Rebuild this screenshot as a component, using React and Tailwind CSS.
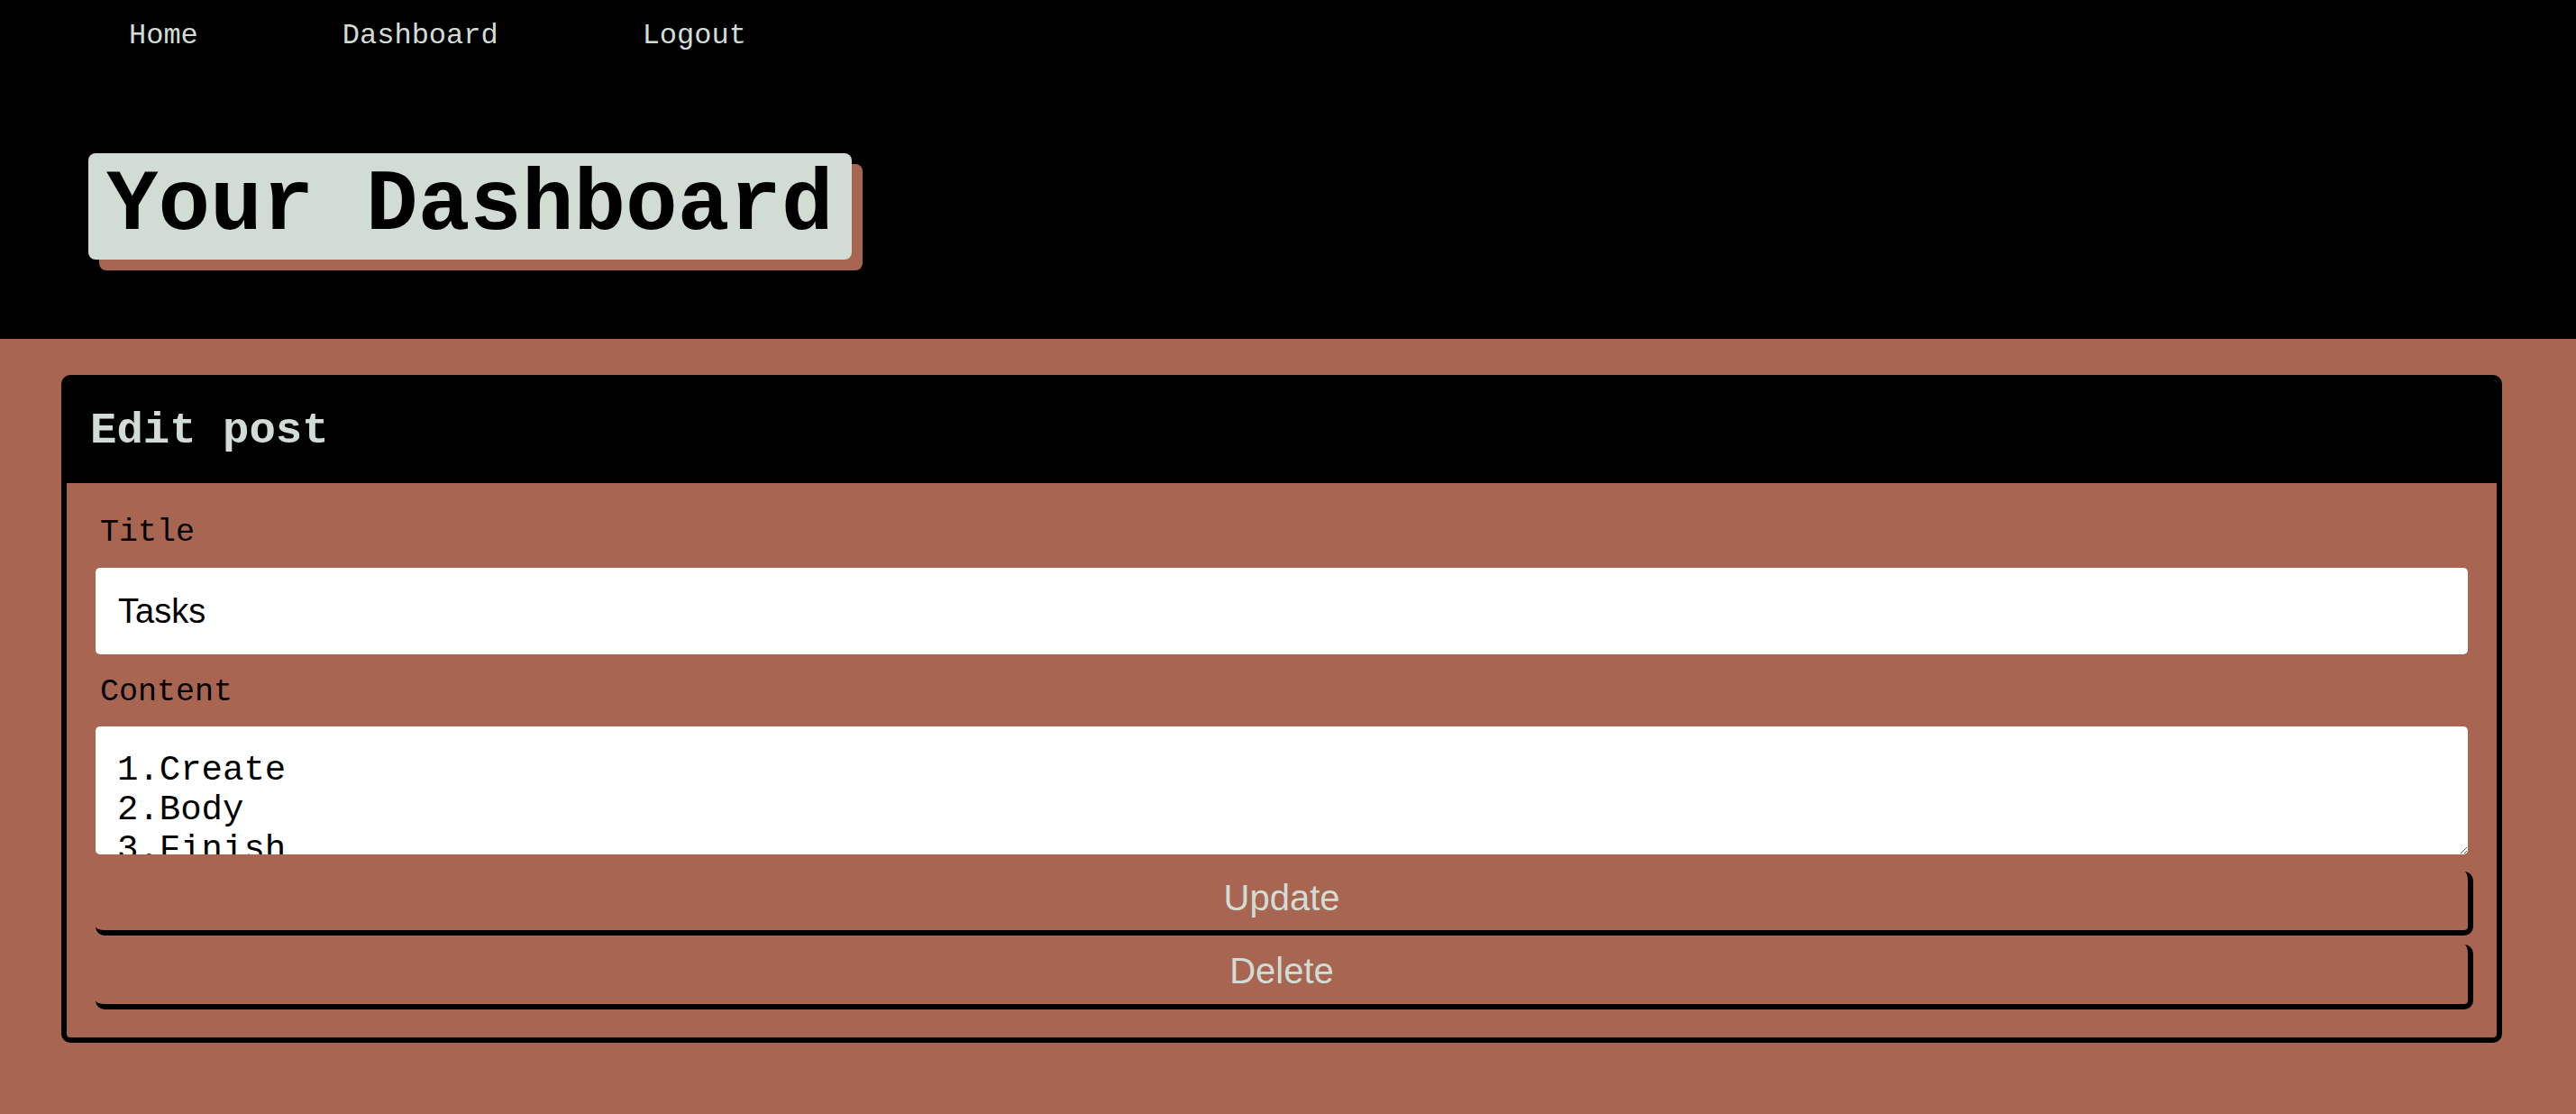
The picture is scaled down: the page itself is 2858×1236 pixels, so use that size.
import React, { useState } from "react";

const mono = "font-['Liberation_Mono','Courier_New',monospace]";
const sans = "font-['Liberation_Sans',Arial,sans-serif]";

const App = () => {
    const [title, setTitle] = useState("Tasks");
    const [content, setContent] = useState("1.Create\n2.Body\n3.Finish");

    return (
        <div className="min-h-screen bg-[#a86652]">
            {/* Header */}
            <header className="h-[376px] bg-black">
                <nav className={`flex gap-[160px] pl-[143px] pt-[22px] text-[32px] leading-[36px] text-[#d0dcd4] ${mono}`}>
                    <a href="#">Home</a>
                    <a href="#">Dashboard</a>
                    <a href="#">Logout</a>
                </nav>
                <div className="pl-[98px] pt-[112px]">
                    <h1
                        className={`inline-block rounded-[8px] bg-[#d0dcd4] px-[20px] py-[4px] text-[96px] font-bold leading-[110px] text-black shadow-[12px_12px_0_#a86652] ${mono}`}
                    >
                        Your Dashboard
                    </h1>
                </div>
            </header>

            {/* Edit card */}
            <main className="pl-[68px] pr-[82px] pt-[40px] pb-[79px]">
                <div className="overflow-hidden rounded-[10px] border-[6px] border-black">
                    <div className="flex h-[114px] items-center bg-black px-[26px]">
                        <h2 className={`text-[49px] font-bold text-[#d0dcd4] ${mono}`}>Edit post</h2>
                    </div>
                    <form className="px-[32px] pt-[35px] pb-[31px]" onSubmit={(e) => e.preventDefault()}>
                        <label className={`block pl-[5px] text-[35px] leading-[40px] text-black ${mono}`}>Title</label>
                        <input
                            value={title}
                            onChange={(e) => setTitle(e.target.value)}
                            className={`mt-[19px] block h-[96px] w-full rounded-[5px] bg-white px-[25px] text-[38px] text-black outline-none ${sans}`}
                        />
                        <label className={`mt-[22px] block pl-[5px] text-[35px] leading-[40px] text-black ${mono}`}>Content</label>
                        <textarea
                            value={content}
                            onChange={(e) => setContent(e.target.value)}
                            className={`mt-[18px] block h-[142px] w-full overflow-hidden rounded-[5px] bg-white pl-[24px] pr-[24px] pt-[27px] text-[39px] leading-[44px] text-black outline-none ${mono}`}
                        />
                        <button
                            type="submit"
                            className={`mt-[19px] box-content block h-[46px] w-full rounded-[10px] border-r-[6px] border-b-[6px] border-black bg-[#a86652] pt-[6px] pb-[13px] text-center text-[40px] leading-[46px] text-[#d0dcd4] ${sans}`}
                        >
                            Update
                        </button>
                        <button
                            type="button"
                            className={`mt-[10px] box-content block h-[46px] w-full rounded-[10px] border-r-[6px] border-b-[6px] border-black bg-[#a86652] pt-[6px] pb-[14px] text-center text-[40px] leading-[46px] text-[#d0dcd4] ${sans}`}
                        >
                            Delete
                        </button>
                    </form>
                </div>
            </main>
        </div>
    );
};

export default App;
